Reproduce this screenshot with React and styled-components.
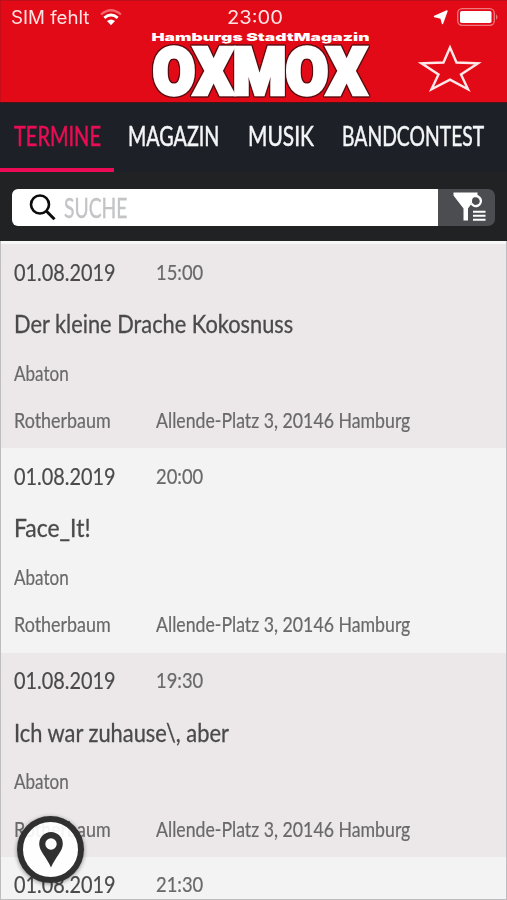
import React, {useLayoutEffect, useRef, useState} from "react";
import styled, {createGlobalStyle} from "styled-components";

const GlobalStyle = createGlobalStyle`
  * {
    box-sizing: border-box;
  }

  body {
    margin: 0;
    background: #f3f3f3;
    font-family: Lato, "Open Sans", sans-serif;
  }
`;

const Screen = styled.div`
  position: relative;
  display: flex;
  flex-direction: column;
  width: 507px;
  height: 900px;
  overflow: hidden;
`;

const Header = styled.header`
  height: 102px;
  flex: none;
  background: #e30a17;
  border-top: 1px solid #b9101a;
  border-left: 1px solid #c50d18;
`;

const StatusBar = styled.div`
  display: grid;
  grid-template-columns: 1fr auto 1fr;
  align-items: center;
  height: 32px;
  padding: 0 8px 0 10px;
  color: #ffe3e4;
  font-family: Inter, sans-serif;
  font-size: 18px;
`;

const StatusGroup = styled.div`
  display: flex;
  align-items: center;
  gap: ${(props) => props.$gap};
  justify-content: ${(props) => (props.$end ? "flex-end" : "flex-start")};
`;

const Brand = styled.div`
  display: grid;
  grid-template-columns: 1fr 240px 1fr;
  height: 69px;
`;

const StarButton = styled.button`
  width: 64px;
  height: 50px;
  margin: 10px 25px 0 auto;
  padding: 0;
  border: 0;
  background: none;
`;

const LogoSvg = styled.svg`
  display: block;
  overflow: visible;
`;

const Tagline = styled.text`
  font-family: Inter, sans-serif;
  font-size: 11px;
  font-weight: 900;
  fill: #fff;
`;

const Wordmark = styled.text`
  font-family: Roboto, sans-serif;
  font-size: 65px;
  font-weight: 900;
  fill: #fff;
  stroke: #fff;
  stroke-width: 4.4px;
  filter: drop-shadow(1px 0 0 #5a0c10) drop-shadow(-1px 0 0 #5a0c10)
    drop-shadow(0 1px 0 #5a0c10) drop-shadow(0 -1px 0 #5a0c10);
`;

const Tabs = styled.nav`
  display: flex;
  flex: none;
  height: 70px;
  background: #1d2026;
  border-top: 1px solid #4a1218;
`;

const Tab = styled.a`
  width: ${(props) => props.$width};
  padding: 15px 0 0 14px;
  border-bottom: 4px solid ${(props) => (props.$active ? "#ec0c56" : "transparent")};
  color: ${(props) => (props.$active ? "#e80d54" : "#f4f5f7")};
  font-size: 26px;
  line-height: 37px;
  -webkit-text-stroke: 0.5px;
`;

const SearchBar = styled.div`
  display: flex;
  flex: none;
  height: 69px;
  padding: 17px 12px 15px;
  background: #202224;
`;

const SearchField = styled.div`
  display: flex;
  align-items: center;
  flex: 1;
  gap: 8px;
  padding-left: 17px;
  border-radius: 6px 0 0 6px;
  background: #fff;
  color: #c3c4c6;
  font-size: 26px;
  line-height: 36px;
  -webkit-text-stroke: 0.4px;
`;

const FilterButton = styled.button`
  width: 57px;
  padding: 0;
  border: 0;
  border-radius: 0 7px 7px 0;
  background: #4c4d50;
`;

const List = styled.main`
  flex: 1;
  min-height: 0;
  overflow: hidden;
  padding-top: 3px;
  border: solid #bdbdbf;
  border-width: 0 1px 1px 1px;
  background: #f8f7f7;
`;

const Event = styled.article`
  display: grid;
  grid-template-columns: 142px 1fr;
  grid-template-rows: 55px 48px 51px 44px;
  align-items: center;
  height: 204.3px;
  padding-left: 13px;
  background: ${(props) => (props.$even ? "#f3f3f3" : "#ece8e9")};
  color: #6a696a;
  font-size: 20.5px;
  -webkit-text-stroke: 0.2px;
`;

const EventDate = styled.div`
  color: #4b4a4b;
  font-size: 23px;
`;

const EventTime = styled.div`
  font-size: 21.5px;
`;

const EventTitle = styled.h2`
  grid-column: 1 / 3;
  margin: 0;
  color: #4b4a4b;
  font-size: 25px;
  font-weight: 400;
  -webkit-text-stroke: 0.3px;
`;

const Place = styled.div`
  grid-column: 1 / 3;
`;

const MapButton = styled.button`
  position: absolute;
  left: 17px;
  bottom: 17px;
  display: flex;
  align-items: center;
  justify-content: center;
  width: 67px;
  height: 67px;
  padding: 0;
  border: 6px solid #303031;
  border-radius: 50%;
  background: rgba(255, 255, 255, 0.92);
  box-shadow: 0 1px 4px rgba(0, 0, 0, 0.45);
`;

const Condensed = styled.span`
  display: block;
  width: max-content;
  white-space: pre;
  transform-origin: 0 50%;
`;

const Slot = styled.span`
  display: block;
  width: ${(props) => props.$width}px;
`;

// Narrows its text to the given width, the page has no condensed face.
const Fit = ({width, children}) => {
  const ref = useRef(null);
  const [scale, setScale] = useState(1);

  useLayoutEffect(() => {
    setScale(width / ref.current.offsetWidth);
  }, [width, children]);

  return (
    <Slot $width={width}>
      <Condensed ref={ref} style={{transform: `scaleX(${scale})`}}>
        {children}
      </Condensed>
    </Slot>
  );
};

const tabs = [
  {name: "TERMINE", width: "114px", text: 87},
  {name: "MAGAZIN", width: "120px", text: 91},
  {name: "MUSIK", width: "94px", text: 66},
  {name: "BANDCONTEST", width: "179px", text: 142},
];

const events = [
  {time: "15:00", title: "Der kleine Drache Kokosnuss", width: 279},
  {time: "20:00", title: "Face_It!", width: 77},
  {time: "19:30", title: "Ich war zuhause\\, aber", width: 215},
  {time: "21:30", title: "", width: 0},
];

const WifiIcon = () => (
  <svg width="22" height="17" viewBox="0 0 22 17" fill="none">
    <path d="M1 5.5Q11-3 21 5.5" stroke="#f2676d" strokeWidth="2.2" />
    <path d="M4.3 8.9Q11 3.2 17.7 8.9" stroke="#fff" strokeWidth="2.8" />
    <path d="M7 12Q11 8.8 15 12L11 16.2Z" fill="#fff" />
  </svg>
);

const LocationIcon = () => (
  <svg width="15" height="15" viewBox="0 0 15 15">
    <path
      d="M14 1L9.5 13.5 8 8 1.5 6.5Z"
      fill="#fff"
      stroke="#fff"
      strokeWidth="1.4"
      strokeLinejoin="round"
    />
  </svg>
);

const BatteryIcon = () => (
  <svg width="42" height="18" viewBox="0 0 42 18">
    <rect x=".7" y=".7" width="36.6" height="16.6" rx="4.5" fill="none" stroke="#f17a80" strokeWidth="1.3" />
    <rect x="3" y="3" width="31.5" height="12" rx="1.8" fill="#fff" />
    <path d="M39 6.2Q42 9 39 11.8Z" fill="#f17a80" />
  </svg>
);

const StarIcon = () => (
  <svg width="64" height="50" viewBox="0 0 64 50">
    <path
      d="M32 4.5L38.5 19.5 60 20.3 43 31.5 50 46.2 32 36.6 13.5 46.2 20.5 31.5 3.5 20.3 25.5 19.5Z"
      fill="none"
      stroke="#ffe9ea"
      strokeWidth="2.4"
    />
  </svg>
);

const Logo = () => (
  <LogoSvg width="240" height="69" viewBox="0 0 240 69">
    <Wordmark x="19" y="60.5" textLength="213" lengthAdjust="spacingAndGlyphs">
      OXMOX
    </Wordmark>
    <Tagline x="17.5" y="8" textLength="218" lengthAdjust="spacingAndGlyphs">
      Hamburgs StadtMagazin
    </Tagline>
  </LogoSvg>
);

const SearchIcon = () => (
  <svg width="27" height="27" viewBox="0 0 27 27" fill="none" stroke="#0b0b0b">
    <circle cx="11" cy="10.5" r="9" strokeWidth="2.6" />
    <path d="M17.3 17L25.5 25.3" strokeWidth="3" />
  </svg>
);

const FilterIcon = () => (
  <svg width="57" height="37" viewBox="0 0 57 37">
    <path d="M15.5 3.5H39.5V6.5L30 19.5V31.5H25.5V19.5L15.5 6.5Z" fill="#fff" />
    <circle cx="38" cy="12" r="4" fill="#4c4d50" />
    <path
      d="M33.5 14.5A5 5 0 1 0 36.5 7.2"
      fill="none"
      stroke="#fff"
      strokeWidth="2.4"
    />
    <path d="M35 22.8H47.5M35 26.8H47.5M35 30.8H47.5" stroke="#fff" strokeWidth="2.1" />
  </svg>
);

const PinIcon = () => (
  <svg width="24" height="36" viewBox="0 0 24 36">
    <path
      d="M12 0A11.8 11.8 0 0 0 .2 12C.2 19 7.5 25 12 35.5 16.5 25 23.8 19 23.8 12A11.8 11.8 0 0 0 12 0ZM12 6.3A5.7 5.7 0 1 1 12 17.7 5.7 5.7 0 0 1 12 6.3Z"
      fill="#303031"
      fillRule="evenodd"
    />
  </svg>
);

const App = () => {
  return (
    <Screen>
      <GlobalStyle />
      <Header>
        <StatusBar>
          <StatusGroup $gap="10px">
            <Fit width={79}>SIM fehlt</Fit>
            <WifiIcon />
          </StatusGroup>
          <Fit width={56}>23:00</Fit>
          <StatusGroup $end $gap="9px">
            <LocationIcon />
            <BatteryIcon />
          </StatusGroup>
        </StatusBar>
        <Brand>
          <span />
          <Logo />
          <StarButton aria-label="Favoriten">
            <StarIcon />
          </StarButton>
        </Brand>
      </Header>
      <Tabs>
        {tabs.map((tab, i) => (
          <Tab key={tab.name} $width={tab.width} $active={i === 0}>
            <Fit width={tab.text}>{tab.name}</Fit>
          </Tab>
        ))}
      </Tabs>
      <SearchBar>
        <SearchField>
          <SearchIcon />
          <Fit width={63}>SUCHE</Fit>
        </SearchField>
        <FilterButton aria-label="Filter">
          <FilterIcon />
        </FilterButton>
      </SearchBar>
      <List>
        {events.map((event, i) => (
          <Event key={event.time} $even={i % 2 === 1}>
            <EventDate>
              <Fit width={102}>01.08.2019</Fit>
            </EventDate>
            <EventTime>
              <Fit width={47}>{event.time}</Fit>
            </EventTime>
            {event.title && (
              <>
                <EventTitle>
                  <Fit width={event.width}>{event.title}</Fit>
                </EventTitle>
                <Place>
                  <Fit width={55}>Abaton</Fit>
                </Place>
                <Fit width={97}>Rotherbaum</Fit>
                <Fit width={254}>Allende-Platz 3, 20146 Hamburg</Fit>
              </>
            )}
          </Event>
        ))}
      </List>
      <MapButton aria-label="Karte">
        <PinIcon />
      </MapButton>
    </Screen>
  );
};

export default App;
